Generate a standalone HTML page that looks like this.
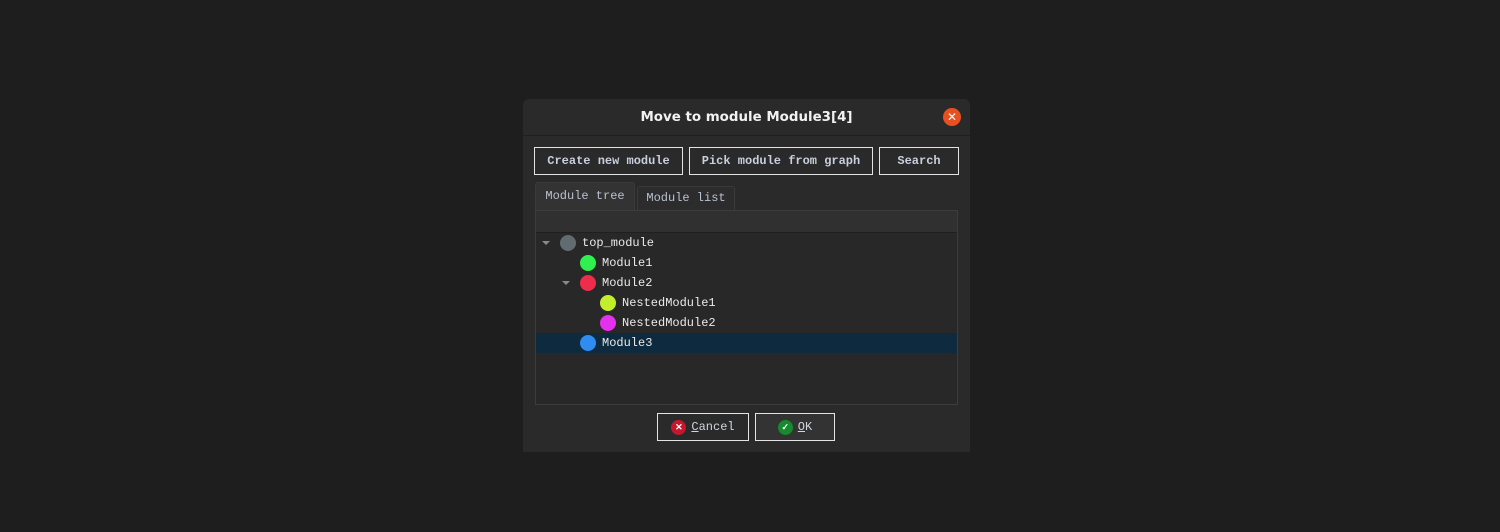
<!DOCTYPE html>
<html><head><style>
body{margin:0;width:1500px;height:532px;background:#1e1e1e;font-family:"Liberation Mono",monospace;position:relative;overflow:hidden}
.dlg{position:absolute;left:523px;top:99px;width:447px;height:353px;background:#2a2a2a;border-radius:6px 6px 0 0}
.title{position:absolute;left:0;top:0;width:447px;height:36px;border-bottom:1px solid #1f1f1f;color:#f2f2f2;font:bold 13.4px "DejaVu Sans",sans-serif;text-align:center;line-height:37px}
.close{position:absolute;left:420px;top:9px;width:18px;height:18px;border-radius:50%;background:#e9501f;color:#fff;font:12px "Liberation Sans";text-align:center;line-height:18px}
.btn{position:absolute;border:1px solid #e4e4e4;box-sizing:border-box;color:#c7d0dc;font-size:12px;font-weight:bold;text-align:center;line-height:26px}
.ib{display:flex;align-items:center;justify-content:center;gap:5px;font-weight:normal;color:#d0d6de}
.ic{display:inline-block;width:15px;height:15px;border-radius:50%;color:#fff;font:bold 9px/15px sans-serif;text-align:center}
.tab{position:absolute;box-sizing:border-box;border:1px solid #3a3a3a;border-bottom:none;color:#b8c2cf;font-size:12px;text-align:center;border-radius:3px 3px 0 0}
.tree{position:absolute;left:12px;top:111px;width:423px;height:195px;box-sizing:border-box;border:1px solid #3c3c3c;background:#282828}
.hdr{position:absolute;left:0;top:0;width:421px;height:21px;background:#303030;border-bottom:1px solid #1f1f1f}
.row{position:absolute;left:0;width:421px;height:20px;color:#eaeaea;font-size:12px;line-height:20px}
.dot{position:absolute;top:2px;width:16px;height:16px;border-radius:50%}
.arr{position:absolute;top:8px;width:0;height:0;border-left:4px solid transparent;border-right:4px solid transparent;border-top:4px solid #8a8a8a}
.sel{background:#0d2a3e}
</style></head><body>
<div class="dlg">
<div class="title">Move to module Module3[4]<div class="close">✕</div></div>
<div class="btn" style="left:11px;top:48px;width:149px;height:28px">Create new module</div>
<div class="btn" style="left:166px;top:48px;width:184px;height:28px">Pick module from graph</div>
<div class="btn" style="left:356px;top:48px;width:80px;height:28px">Search</div>
<div class="tab" style="left:12px;top:83px;width:100px;height:28px;background:#333;line-height:26px">Module tree</div>
<div class="tab" style="left:114px;top:87px;width:98px;height:24px;background:#2c2c2c;line-height:22px">Module list</div>
<div class="tree">
<div class="hdr"></div>
<div class="row" style="top:22px"><div class="arr" style="left:6px"></div><div class="dot" style="left:24px;background:#626c70"></div><span style="position:absolute;left:46px">top_module</span></div>
<div class="row" style="top:42px"><div class="dot" style="left:44px;background:#2ff04e"></div><span style="position:absolute;left:66px">Module1</span></div>
<div class="row" style="top:62px"><div class="arr" style="left:26px"></div><div class="dot" style="left:44px;background:#ee2d4c"></div><span style="position:absolute;left:66px">Module2</span></div>
<div class="row" style="top:82px"><div class="dot" style="left:64px;background:#c3ee2c"></div><span style="position:absolute;left:86px">NestedModule1</span></div>
<div class="row" style="top:102px"><div class="dot" style="left:64px;background:#e431ee"></div><span style="position:absolute;left:86px">NestedModule2</span></div>
<div class="row sel" style="top:122px"><div class="dot" style="left:44px;background:#2f8cf0"></div><span style="position:absolute;left:66px">Module3</span></div>
</div>
<div class="btn ib" style="left:134px;top:314px;width:92px;height:28px"><span class="ic" style="background:#c8172c">✕</span><span><u>C</u>ancel</span></div>
<div class="btn ib" style="left:232px;top:314px;width:80px;height:28px;background:#333"><span class="ic" style="background:#178a2e">✓</span><span><u>O</u>K</span></div>
</div>
</body></html>
